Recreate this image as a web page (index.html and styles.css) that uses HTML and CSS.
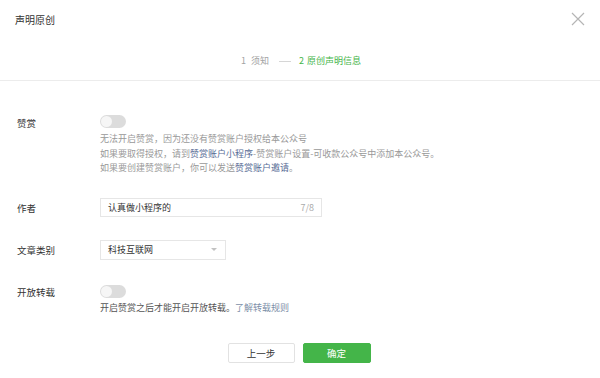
FILE: index.html
```html
<!DOCTYPE html>
<html lang="zh-CN">

<head>
    <meta charset="UTF-8">
    <meta name="viewport" content="width=device-width, initial-scale=1.0">
    <title>声明原创</title>
    <link rel="stylesheet" href="styles.css">
</head>

<body>
    <div class="dialog">
        <div class="header">
            <span class="title">声明原创</span>
            <svg class="close" width="14" height="14" viewBox="0 0 14 14">
                <path d="M1 1 L13 13 M13 1 L1 13" stroke="#b5b5b5" stroke-width="1.2" fill="none" />
            </svg>
        </div>
        <div class="steps">
            <span class="step">1 须知</span>
            <span class="dash"></span>
            <span class="step current">2 原创声明信息</span>
        </div>

        <div class="form">
            <div class="row">
                <div class="label">赞赏</div>
                <div class="field">
                    <div class="toggle"><span class="knob"></span></div>
                    <div class="desc">
                        <p>无法开启赞赏，因为还没有赞赏账户授权给本公众号</p>
                        <p>如果要取得授权，请到<a>赞赏账户小程序</a>-赞赏账户设置-可收款公众号中添加本公众号。</p>
                        <p>如果要创建赞赏账户，你可以发送<a>赞赏账户邀请</a>。</p>
                    </div>
                </div>
            </div>

            <div class="row row-author">
                <div class="label">作者</div>
                <div class="field">
                    <div class="input">
                        <span>认真做小程序的</span>
                        <span class="count">7/8</span>
                    </div>
                </div>
            </div>

            <div class="row row-category">
                <div class="label">文章类别</div>
                <div class="field">
                    <div class="select">
                        <span>科技互联网</span>
                        <span class="arrow"></span>
                    </div>
                </div>
            </div>

            <div class="row row-reprint">
                <div class="label">开放转载</div>
                <div class="field">
                    <div class="toggle"><span class="knob"></span></div>
                    <div class="desc desc-dark">
                        <p>开启赞赏之后才能开启开放转载。<a class="light">了解转载规则</a></p>
                    </div>
                </div>
            </div>

            <div class="buttons">
                <button class="btn">上一步</button>
                <button class="btn primary">确定</button>
            </div>
        </div>
    </div>
</body>

</html>
```

FILE: styles.css
```css
* {
    margin: 0;
    padding: 0;
    box-sizing: border-box;
}

body {
    width: 600px;
    height: 378px;
    background: #fff;
    font-family: "Noto Sans CJK SC", "Noto Sans", sans-serif;
    color: #333;
    overflow: hidden;
}

.dialog {
    width: 600px;
    height: 378px;
}

.header {
    height: 38px;
    display: flex;
    align-items: center;
    justify-content: space-between;
    padding: 0 15px 0 15px;
}

.title {
    font-size: 10px;
    color: #333;
}

.close {
    margin-top: -1px;
}

.steps {
    display: flex;
    justify-content: center;
    align-items: center;
    padding: 16px 0 12px 2px;
    font-size: 9px;
    line-height: 14px;
    color: #a3a3a3;
    border-bottom: 1px solid #ececec;
}

.step {
    word-spacing: 3px;
}

.dash {
    width: 12px;
    height: 1px;
    background: #d6d6d6;
    margin: 0 8px 0 10px;
}

.step.current {
    color: #44b549;
    word-spacing: 1px;
}

.form {
    padding-top: 34px;
}

.row {
    display: flex;
}

.label {
    width: 100px;
    padding-left: 17px;
    font-size: 9.5px;
    line-height: 16px;
    color: #333;
}

.toggle {
    width: 26px;
    height: 13px;
    border-radius: 7px;
    background: #dcdcdc;
    padding: 1px;
}

.knob {
    display: block;
    width: 11px;
    height: 11px;
    border-radius: 50%;
    background: #f6f6f6;
}

.desc {
    margin-top: 4px;
    font-size: 9px;
    line-height: 14.5px;
    color: #999;
}

.desc a {
    color: #576b95;
}

.desc-dark {
    color: #555;
}

.desc a.light {
    color: #7d8fa8;
}

.row-author {
    margin-top: 22px;
}

.row-author .label,
.row-category .label {
    line-height: 20px;
}

.input {
    width: 222px;
    height: 19px;
    border: 1px solid #e6e6e6;
    display: flex;
    align-items: center;
    justify-content: space-between;
    padding: 0 7px 0 7px;
    font-size: 9px;
    color: #333;
}

.count {
    font-size: 9px;
    color: #aaa;
}

.row-category {
    margin-top: 22px;
}

.select {
    width: 126px;
    height: 20px;
    border: 1px solid #e6e6e6;
    display: flex;
    align-items: center;
    justify-content: space-between;
    padding: 0 8px 0 7px;
    font-size: 9px;
    color: #333;
}

.arrow {
    width: 0;
    height: 0;
    border-left: 3px solid transparent;
    border-right: 3px solid transparent;
    border-top: 3px solid #c2c2c2;
}

.row-reprint {
    margin-top: 25px;
}

.row-reprint .label {
    line-height: 14px;
}

.row-reprint .desc {
    margin-top: 3px;
}

.buttons {
    display: flex;
    justify-content: center;
    gap: 8px;
    margin-top: 28px;
    padding-right: 2px;
}

.btn {
    width: 67px;
    height: 20px;
    border: 1px solid #e2e2e2;
    border-radius: 2px;
    background: #fff;
    font-family: "Noto Sans CJK SC", sans-serif;
    font-size: 9.5px;
    color: #333;
}

.btn.primary {
    width: 68px;
    border-color: #44b549;
    background: #44b549;
    color: #fff;
}
```
